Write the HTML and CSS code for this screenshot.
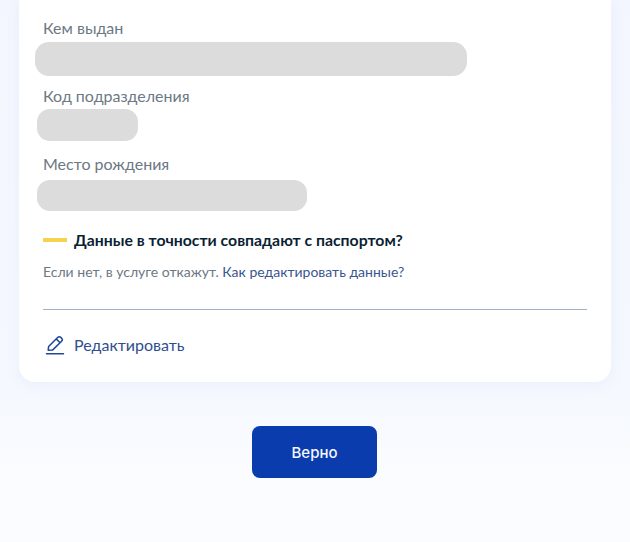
FILE: index.html
```html
<!DOCTYPE html>
<html lang="ru">
<head>
<meta charset="utf-8">
<title>Данные паспорта</title>
<link rel="stylesheet" href="styles.css">
</head>
<body>
<main class="page">
  <section class="card">
    <div class="field-label first">Кем выдан</div>
    <div class="mask mask-issuer"></div>
    <div class="field-label code">Код подразделения</div>
    <div class="mask mask-code"></div>
    <div class="field-label place">Место рождения</div>
    <div class="mask mask-place"></div>
    <div class="question">
      <span class="dash"></span>
      <span class="question-text">Данные в точности совпадают с паспортом?</span>
    </div>
    <p class="hint">Если нет, в услуге откажут. <a class="link" href="#">Как редактировать данные?</a></p>
    <hr class="divider">
    <a class="edit" href="#">
      <svg class="edit-icon" width="20" height="20" viewBox="0 0 20 20" fill="none" stroke="#1f4796" stroke-width="1.5">
        <path d="M3.2 15.2 3.6 11.6 12.6 2.4C13.5 1.5 14.9 1.5 15.8 2.4L16.6 3.2C17.5 4.1 17.5 5.4 16.6 6.3L7.5 15.1Z" stroke-linejoin="round"/>
        <path d="M11.2 3.9 15.1 7.8"/>
        <path d="M1.5 18.7H18.5" stroke-linecap="round"/>
      </svg>
      <span>Редактировать</span>
    </a>
  </section>
  <div class="actions">
    <button class="confirm" type="button">Верно</button>
  </div>
</main>
</body>
</html>
```
FILE: styles.css
```css
* { box-sizing: border-box; }
html, body { margin: 0; height: 100%; }
body {
  background: linear-gradient(180deg, #f3f6fe 0%, #f5f8fe 72%, #fafcff 88%, #fbfcff 100%);
  font-family: Lato, "Noto Sans", sans-serif;
  overflow: hidden;
}
.page { height: 542px; padding: 0 19px; }
.card {
  height: 382px;
  padding: 18px 24px 0;
  background: #fff;
  border-radius: 0 0 16px 16px;
  box-shadow: 0 3px 12px rgba(205, 216, 238, 0.25);
}
.field-label {
  height: 20px;
  font-size: 16px;
  line-height: 20px;
  color: #6c7884;
}
.field-label.first { margin-bottom: 4px; }
.field-label.code { margin-top: 10px; margin-bottom: 3px; }
.field-label.place { margin-top: 13px; margin-bottom: 6px; }
.mask { background: #dcdcdc; }
.mask-issuer { width: 432px; height: 34px; margin-left: -8.5px; border-radius: 14px; }
.mask-code { width: 101px; height: 32px; margin-left: -6px; border-radius: 13px; }
.mask-place { width: 270.5px; height: 31px; margin-left: -6.5px; border-radius: 13px; }
.question {
  display: flex;
  align-items: center;
  gap: 7px;
  margin-top: 19px;
  height: 20px;
}
.dash { width: 24px; height: 4px; background: #f5d34f; flex: none; }
.question-text { font-size: 15.8px; font-weight: 700; color: #0b1f33; line-height: 20px; }
.hint {
  margin: 12px 0 0;
  font-size: 14px;
  line-height: 20px;
  color: #6c7884;
}
.link { color: #3a568f; text-decoration: none; }
.divider { margin: 27px 0 0; border: 0; border-top: 1px solid #a3b1ca; }
.edit {
  display: flex;
  align-items: center;
  gap: 9px;
  margin-top: 25px;
  margin-left: 2px;
  height: 20px;
  font-size: 16px;
  line-height: 20px;
  color: #2f4f8f;
  text-decoration: none;
}
.edit-icon { flex: none; }
.actions { display: flex; justify-content: center; margin-top: 44px; padding-right: 1px; }
.confirm {
  width: 125px;
  height: 52px;
  border: 0;
  border-radius: 8px;
  background: #0b3cad;
  color: #f4f8ff;
  font-family: Inter, "Noto Sans", sans-serif;
  font-size: 15px;
  font-weight: 500;
}
```
